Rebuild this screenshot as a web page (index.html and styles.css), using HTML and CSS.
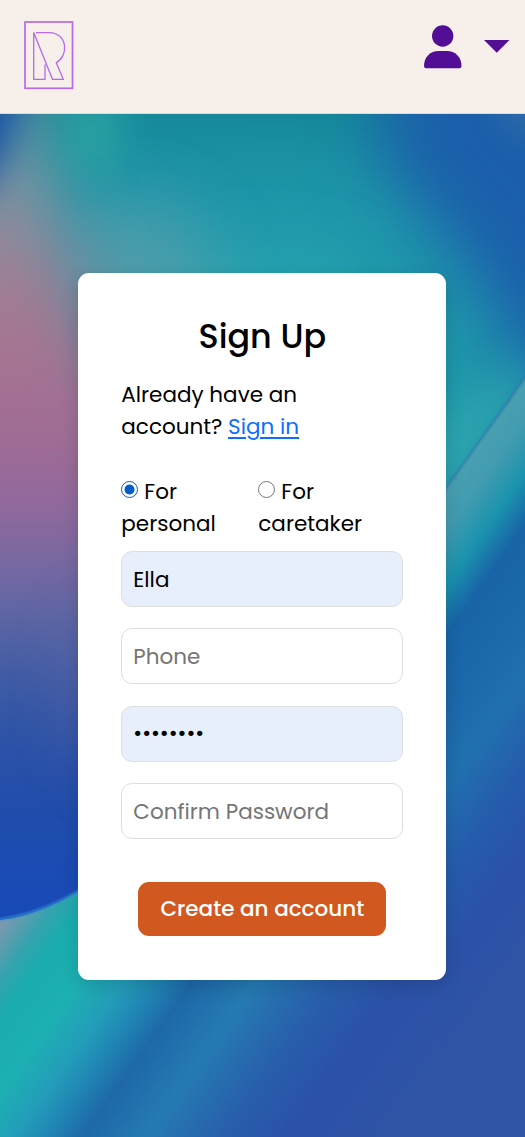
FILE: index.html
```html
<!DOCTYPE html>
<html lang="en">
<head>
<meta charset="utf-8">
<meta name="viewport" content="width=device-width, initial-scale=1">
<title>Sign Up</title>
<link rel="stylesheet" href="styles.css">
</head>
<body>
<header class="header">
  <a class="logo" aria-label="Home">
    <svg width="50" height="69" viewBox="0 0 50 69" fill="none" stroke="#b56be6">
      <rect x="1" y="1" width="47.5" height="66.3" stroke-width="1.7"/>
      <path d="M12 11.600H25C45 12 44 36 32.300 41.700L39.300 58.300H28.500L9.700 11.500V58.300H21V43.500" stroke-width="1.3"/>
    </svg>
  </a>
  <div class="account">
    <svg class="user-icon" width="38" height="44" viewBox="0 0 38 44" fill="#520f95">
      <circle cx="18.700" cy="11" r="10.700"/>
      <path d="M0 41C0 32 6.500 26 14.500 26H23C31 26 37.500 32 37.500 41Q37.500 43.300 35.200 43.300H2.300Q0 43.300 0 41Z"/>
    </svg>
    <svg class="caret" width="26" height="13" viewBox="0 0 26 13" fill="#520f95"><path d="M0 0H25.500L12.750 12.700Z"/></svg>
  </div>
</header>
<main class="page">
  <svg class="backdrop" viewBox="0 114 525 1023" preserveAspectRatio="none" aria-hidden="true">
    <defs>
      <linearGradient id="folds" gradientUnits="userSpaceOnUse" x1="0" y1="900" x2="378.4" y2="1170.3">
        <stop offset=".02" stop-color="#8896b0"/><stop offset=".1" stop-color="#35a3ae"/>
        <stop offset=".15" stop-color="#1aacae"/><stop offset=".24" stop-color="#1db0b3"/>
        <stop offset=".32" stop-color="#239db9"/><stop offset=".37" stop-color="#2089b5"/>
        <stop offset=".44" stop-color="#1e68a8"/><stop offset=".55" stop-color="#257ab2"/>
        <stop offset=".68" stop-color="#285fac"/><stop offset=".8" stop-color="#2b51a8"/>
        <stop offset="1" stop-color="#3055a6"/>
      </linearGradient>
      <linearGradient id="rightFold" gradientUnits="userSpaceOnUse" x1="0" y1="900" x2="378.4" y2="1170.3">
        <stop offset=".265" stop-color="#48a0b0"/><stop offset=".32" stop-color="#429bb0"/>
        <stop offset=".385" stop-color="#1b93ae"/><stop offset=".45" stop-color="#1864a7"/>
        <stop offset=".54" stop-color="#1b68aa"/><stop offset=".64" stop-color="#2170b0"/>
        <stop offset=".75" stop-color="#255cac"/><stop offset=".86" stop-color="#2b51a8"/>
        <stop offset="1" stop-color="#3055a6"/>
      </linearGradient>
      <linearGradient id="leftEdge" gradientUnits="userSpaceOnUse" x1="0" y1="120" x2="0" y2="920">
        <stop offset="0" stop-color="#6c9ca1"/><stop offset=".1" stop-color="#8691a0"/>
        <stop offset=".23" stop-color="#a67a91"/><stop offset=".38" stop-color="#a36c93"/>
        <stop offset=".5" stop-color="#8e689e"/><stop offset=".61" stop-color="#6068a5"/>
        <stop offset=".72" stop-color="#3658a5"/><stop offset=".84" stop-color="#224daa"/>
        <stop offset="1" stop-color="#1649b8"/>
      </linearGradient>
      <linearGradient id="topShade" x1="0" y1="0" x2="0" y2="1">
        <stop offset="0" stop-color="#0f7f8f" stop-opacity=".6"/><stop offset="1" stop-color="#158c9c" stop-opacity="0"/>
      </linearGradient>
      <filter id="soft" filterUnits="userSpaceOnUse" x="-300" y="-200" width="1200" height="1500" color-interpolation-filters="sRGB"><feGaussianBlur stdDeviation="34"/></filter>
      <filter id="mid" filterUnits="userSpaceOnUse" x="-300" y="-200" width="1200" height="1500" color-interpolation-filters="sRGB"><feGaussianBlur stdDeviation="20"/></filter>
      <filter id="fine" filterUnits="userSpaceOnUse" x="-20" y="300" width="600" height="700"><feGaussianBlur stdDeviation="1"/></filter>
      <clipPath id="sphere"><path d="M0 114H525V378L440 496V500L120 860Q60 913 0 920Z"/></clipPath>
    </defs>
    <rect y="114" width="525" height="1023" fill="url(#folds)"/>
    <path d="M440 496L525 378V1137H440Z" fill="url(#rightFold)"/>
    <g clip-path="url(#sphere)">
      <rect y="114" width="525" height="820" fill="#1f98ab"/>
      <rect y="114" width="525" height="110" fill="url(#topShade)"/>
      <path d="M400 -60H720V430H560L475 280L375 150Z" fill="#1b5fab" filter="url(#soft)"/>
      <path d="M490 60H600V128H515Z" fill="#4676a5" opacity=".7" filter="url(#mid)"/>
      <path d="M540 350L530 385L450 500H390L420 430Z" fill="#38aeb2" opacity=".55" filter="url(#mid)"/>
      <ellipse cx="260" cy="300" rx="110" ry="50" fill="#2eacb3" opacity=".6" filter="url(#soft)"/>
      <ellipse cx="135" cy="270" rx="75" ry="70" fill="#5c9fac" opacity=".75" filter="url(#soft)"/>
      <path d="M-300 30L30 60L60 210L95 330L160 430L300 560V1000H-300Z" fill="url(#leftEdge)" filter="url(#soft)"/>
      <ellipse cx="95" cy="130" rx="26" ry="42" fill="#2faca5" opacity=".75" filter="url(#mid)"/>
      <path d="M-80 0H36L16 130L-12 185L-80 225Z" fill="#1250a5" filter="url(#mid)"/>
      <ellipse cx="110" cy="690" rx="35" ry="80" fill="#7a6ca5" opacity=".4" filter="url(#soft)"/>
    </g>
    <path d="M-5 920Q60 913 120 860" fill="none" stroke="#308bd2" stroke-width="2" filter="url(#fine)"/>
    <path d="M440 496L525 378" stroke="#3378ad" stroke-width="1.800" filter="url(#fine)"/>
  </svg>
  <form class="card">
    <h1 class="title">Sign Up</h1>
    <p class="intro">Already have an<br>account? <a class="link" href="#">Sign in</a></p>
    <div class="roles">
      <label class="role"><input class="radio" type="radio" name="role" checked>For<br>personal</label>
      <label class="role"><input class="radio" type="radio" name="role">For<br>caretaker</label>
    </div>
    <div class="fields">
      <input class="field filled" type="text" value="Ella" aria-label="Name">
      <input class="field" type="tel" placeholder="Phone">
      <input class="field filled" type="password" value="password" aria-label="Password">
      <input class="field" type="password" placeholder="Confirm Password">
    </div>
    <button class="submit" type="button">Create an account</button>
  </form>
</main>
</body>
</html>
```
FILE: styles.css
```css
* { box-sizing: border-box; }

body {
  margin: 0;
  font: 400 21.500px/32px Poppins, Inter, sans-serif;
  color: #000;
}

.header {
  display: flex;
  justify-content: space-between;
  align-items: flex-start;
  height: 114px;
  padding: 20px 15px 0 24px;
  background: #f6efea;
  border-bottom: 1px solid #d9dcda;
}

.logo, .user-icon, .caret, .backdrop { display: block; }

.logo { margin-top: 1px; }

.account {
  display: flex;
  align-items: flex-start;
  gap: 22px;
  padding-top: 5px;
}

.caret { margin-top: 15px; }

.page {
  display: grid;
  height: 1023px;
}

.backdrop, .card { grid-area: 1 / 1; }

.backdrop {
  width: 100%;
  height: 1023px;
}

.card {
  z-index: 1;
  justify-self: start;
  width: 368px;
  height: 706.500px;
  margin: 159px 0 0 78.300px;
  padding: 42px 43px 0;
  background: #fff;
  border-radius: 11px;
  box-shadow: 0 6px 18px rgba(0, 0, 0, .14);
}

.title {
  margin: 0;
  font-size: 33.400px;
  line-height: 43px;
  font-weight: 500;
  text-align: center;
}

.intro { margin: 20.500px 0 33px; }

.link { color: #0d6efd; text-underline-offset: 3px; }

.roles {
  display: grid;
  grid-template-columns: 137px 1fr;
}

.radio {
  appearance: none;
  width: 17px;
  height: 17px;
  margin: 0 6px 0 0;
  border: 1.500px solid #767676;
  border-radius: 50%;
  vertical-align: 0.500px;
}

.radio:checked {
  border-color: #005fcc;
  background: radial-gradient(circle, #005fcc 4.700px, #fff 5.300px);
}

.fields {
  display: grid;
  gap: 21.400px;
  margin-top: 11.500px;
}

.field {
  width: 282px;
  height: 56px;
  padding: 0 11px;
  border: 1px solid #dedede;
  border-radius: 11px;
  background: #fff;
  font: inherit;
  color: #000;
}

.field::placeholder { color: #757575; opacity: 1; }

.filled { background: #e7effd; }

.submit {
  display: block;
  width: 248px;
  height: 54px;
  margin: 43px auto 0;
  padding: 0;
  border: 0;
  border-radius: 11px;
  background: #d15920;
  color: #fff;
  font: inherit;
  font-weight: 500;
}
```
